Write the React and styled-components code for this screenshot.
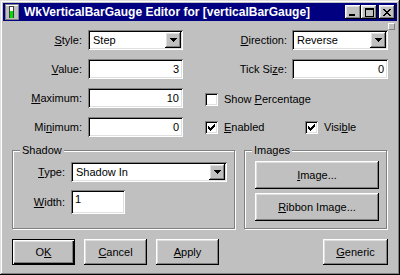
import React from "react";
import styled, { createGlobalStyle, css } from "styled-components";

const Global = createGlobalStyle`
  html, body { margin: 0; padding: 0; background: #c0c0c0; }
  body { font-family: "Liberation Sans", Arial, sans-serif; font-size: 11px; color: #000; }
  * { box-sizing: border-box; }
`;

const raised = css`
  box-shadow: inset -1px -1px #000, inset 1px 1px #fff, inset -2px -2px #808080, inset 2px 2px #dfdfdf;
`;
const sunken = css`
  box-shadow: inset 1px 1px #808080, inset -1px -1px #fff, inset 2px 2px #000, inset -2px -2px #dfdfdf;
`;

const Window = styled.div`
  position: relative;
  width: 400px;
  height: 275px;
  padding: 3px;
  display: flex;
  flex-direction: column;
  background: #c0c0c0;
  box-shadow: inset -1px -1px #000, inset 1px 1px #dfdfdf, inset -2px -2px #808080, inset 2px 2px #fff;
`;

const TitleBar = styled.div`
  height: 18px;
  background: #000080;
  color: #fff;
  display: flex;
  align-items: center;
  padding: 0 2px;
`;

const TitleText = styled.div`
  flex: 1;
  margin-left: 3px;
  font-weight: bold;
  font-size: 12px;
  white-space: nowrap;
`;

const CaptionGroup = styled.div`
  display: flex;
  gap: ${(p) => p.gap || 0}px;
`;

const CaptionButton = styled.div`
  width: 16px;
  height: 14px;
  background: #c0c0c0;
  ${raised};
  display: flex;
  align-items: center;
  justify-content: center;
`;

const Grip = styled.div`
  position: absolute;
  top: 23px;
  left: 388px;
  width: 7px;
  height: 7px;
  border: 1px solid #808080;
  border-top-color: #fff;
  border-left-color: #fff;
  background: #c0c0c0;
`;

const Body = styled.div`
  flex: 1;
  padding: 9px 9px 0 9px;
  display: flex;
  flex-direction: column;
`;

const Top = styled.div`
  display: flex;
  gap: 22px;
`;

const Column = styled.div`
  width: ${(p) => p.w}px;
  display: flex;
  flex-direction: column;
  gap: 9px;
`;

const Row = styled.div`
  display: flex;
  align-items: center;
  height: ${(p) => p.h || 20}px;
`;

const Label = styled.div`
  width: ${(p) => p.w}px;
  margin-right: ${(p) => p.gap}px;
  text-align: right;
  white-space: nowrap;
`;

const U = styled.span`
  text-decoration: underline;
`;

const Field = styled.div`
  position: relative;
  width: ${(p) => p.w}px;
  height: ${(p) => p.h || 20}px;
  background: #fff;
  ${sunken};
  display: flex;
  align-items: ${(p) => (p.top ? "flex-start" : "center")};
  justify-content: ${(p) => (p.right ? "flex-end" : "flex-start")};
  padding: ${(p) => (p.top ? "3px 4px" : p.right ? "0 4px" : "0 5px")};
  white-space: nowrap;
`;

const DropButton = styled.div`
  position: absolute;
  top: 2px;
  right: 2px;
  width: 16px;
  height: 16px;
  background: #c0c0c0;
  ${raised};
  display: flex;
  align-items: center;
  justify-content: center;
`;

const CheckRow = styled.div`
  display: flex;
  align-items: center;
  height: 20px;
  padding-top: ${(p) => p.offset || 0}px;
`;

const CheckItem = styled.div`
  display: flex;
  align-items: center;
  width: ${(p) => (p.w ? `${p.w}px` : "auto")};
`;

const Box = styled.div`
  width: 13px;
  height: 13px;
  background: #fff;
  ${sunken};
  margin-right: 6px;
  display: flex;
`;

const Groups = styled.div`
  display: flex;
  gap: 9px;
  margin-top: 13px;
  height: 79px;
`;

const Group = styled.div`
  position: relative;
  width: ${(p) => p.w}px;
  border: 1px solid #808080;
  box-shadow: inset 1px 1px #fff, 1px 1px #fff;
  display: flex;
  flex-direction: column;
  gap: ${(p) => p.gap}px;
  padding: ${(p) => p.pad};
`;

const Legend = styled.div`
  position: absolute;
  top: -7px;
  left: 7px;
  padding: 0 2px;
  line-height: 13px;
  background: #c0c0c0;
`;

const PushButton = styled.button`
  width: ${(p) => p.w}px;
  height: ${(p) => p.h}px;
  border: none;
  padding: 0;
  margin: 0;
  background: #c0c0c0;
  font: inherit;
  color: #000;
  outline: none;
  ${raised};
  ${(p) =>
    p.$default &&
    css`
      box-shadow: inset 0 0 0 1px #000, inset 2px 2px #fff, inset -2px -2px #000,
        inset -3px -3px #808080, inset 3px 3px #dfdfdf;
    `}
`;

const ButtonBar = styled.div`
  display: flex;
  gap: 9px;
  margin-top: 10px;
`;

const Spacer = styled.div`
  flex: 1;
`;

const Arrow = () => (
  <svg width="7" height="4" viewBox="0 0 7 4" shapeRendering="crispEdges">
    <path d="M0 0h7v1H0zM1 1h5v1H1zM2 2h3v1H2zM3 3h1v1H3z" fill="#000" />
  </svg>
);

const Check = () => (
  <svg width="13" height="13" viewBox="0 0 13 13" shapeRendering="crispEdges">
    <path
      d="M9 3h1v1H9zM8 4h2v1H8zM3 5h1v1H3zM7 5h3v1H7zM3 6h2v1H3zM6 6h3v1H6zM3 7h5v1H3zM4 8h3v1H4zM5 9h1v1H5z"
      fill="#000"
    />
  </svg>
);

const AppIcon = () => (
  <svg width="16" height="16" viewBox="0 0 16 16" shapeRendering="crispEdges">
    <rect x="0.5" y="0.5" width="13" height="15" fill="#c0c0c0" stroke="#808080" />
    <rect x="1" y="1" width="12" height="1" fill="#fff" />
    <rect x="4" y="2" width="5" height="12" fill="#404040" />
    <rect x="5" y="3" width="3" height="4" fill="#fff" />
    <rect x="5" y="7" width="3" height="7" fill="#00e000" />
  </svg>
);

const MinGlyph = () => (
  <svg width="8" height="7" viewBox="0 0 8 7" shapeRendering="crispEdges">
    <rect x="0" y="5" width="6" height="2" fill="#000" />
  </svg>
);
const MaxGlyph = () => (
  <svg width="9" height="9" viewBox="0 0 9 9" shapeRendering="crispEdges">
    <path d="M0 0h9v2H0zM0 2h1v7H0zM8 2h1v7H8zM0 8h9v1H0z" fill="#000" />
  </svg>
);
const CloseGlyph = () => (
  <svg width="8" height="7" viewBox="0 0 8 7" shapeRendering="crispEdges">
    <path
      d="M0 0h2v1H0zM6 0h2v1H6zM1 1h2v1H1zM5 1h2v1H5zM2 2h4v1H2zM3 3h2v1H3zM2 4h4v1H2zM1 5h2v1H1zM5 5h2v1H5zM0 6h2v1H0zM6 6h2v1H6z"
      fill="#000"
    />
  </svg>
);

function Combo({ w, children }) {
  return (
    <Field w={w}>
      {children}
      <DropButton>
        <Arrow />
      </DropButton>
    </Field>
  );
}

function CheckBox({ checked, children, w }) {
  return (
    <CheckItem w={w}>
      <Box>{checked && <Check />}</Box>
      <span>{children}</span>
    </CheckItem>
  );
}

export default function App() {
  return (
    <>
      <Global />
      <Window>
        <TitleBar>
          <AppIcon />
          <TitleText>WkVerticalBarGauge Editor for [verticalBarGauge]</TitleText>
          <CaptionGroup gap={2}>
            <CaptionGroup>
              <CaptionButton>
                <MinGlyph />
              </CaptionButton>
              <CaptionButton>
                <MaxGlyph />
              </CaptionButton>
            </CaptionGroup>
            <CaptionButton>
              <CloseGlyph />
            </CaptionButton>
          </CaptionGroup>
        </TitleBar>
        <Grip />
        <Body>
          <Top>
            <Column w={171}>
              <Row>
                <Label w={70} gap={6}>
                  <U>S</U>tyle:
                </Label>
                <Combo w={95}>Step</Combo>
              </Row>
              <Row>
                <Label w={70} gap={6}>
                  <U>V</U>alue:
                </Label>
                <Field w={95} right>
                  3
                </Field>
              </Row>
              <Row>
                <Label w={70} gap={6}>
                  <U>M</U>aximum:
                </Label>
                <Field w={95} right>
                  10
                </Field>
              </Row>
              <Row>
                <Label w={70} gap={6}>
                  Mi<U>n</U>imum:
                </Label>
                <Field w={95} right>
                  0
                </Field>
              </Row>
            </Column>
            <Column w={183}>
              <Row>
                <Label w={82} gap={5}>
                  <U>D</U>irection:
                </Label>
                <Combo w={96}>Reverse</Combo>
              </Row>
              <Row>
                <Label w={82} gap={5}>
                  Tick Si<U>z</U>e:
                </Label>
                <Field w={96} right>
                  0
                </Field>
              </Row>
              <CheckRow offset={2}>
                <CheckBox>
                  Show <U>P</U>ercentage
                </CheckBox>
              </CheckRow>
              <CheckRow>
                <CheckBox checked w={100}>
                  <U>E</U>nabled
                </CheckBox>
                <CheckBox checked>
                  Visi<U>b</U>le
                </CheckBox>
              </CheckRow>
            </Column>
          </Top>
          <Groups>
            <Group w={223} gap={8} pad="11px 0 0 0">
              <Legend>Shadow</Legend>
              <Row>
                <Label w={52} gap={6}>
                  <U>T</U>ype:
                </Label>
                <Combo w={156}>Shadow In</Combo>
              </Row>
              <Row h={24}>
                <Label w={52} gap={6}>
                  <U>W</U>idth:
                </Label>
                <Field w={54} h={24} top>
                  1
                </Field>
              </Row>
            </Group>
            <Group w={143} gap={4} pad="10px 0 0 10px">
              <Legend>Images</Legend>
              <PushButton w={124} h={28}>
                <U>I</U>mage...
              </PushButton>
              <PushButton w={124} h={28}>
                <U>R</U>ibbon Image...
              </PushButton>
            </Group>
          </Groups>
          <ButtonBar>
            <PushButton w={63} h={26} $default>
              O<U>K</U>
            </PushButton>
            <PushButton w={63} h={26}>
              <U>C</U>ancel
            </PushButton>
            <PushButton w={63} h={26}>
              <U>A</U>pply
            </PushButton>
            <Spacer />
            <PushButton w={65} h={26}>
              <U>G</U>eneric
            </PushButton>
          </ButtonBar>
        </Body>
      </Window>
    </>
  );
}
